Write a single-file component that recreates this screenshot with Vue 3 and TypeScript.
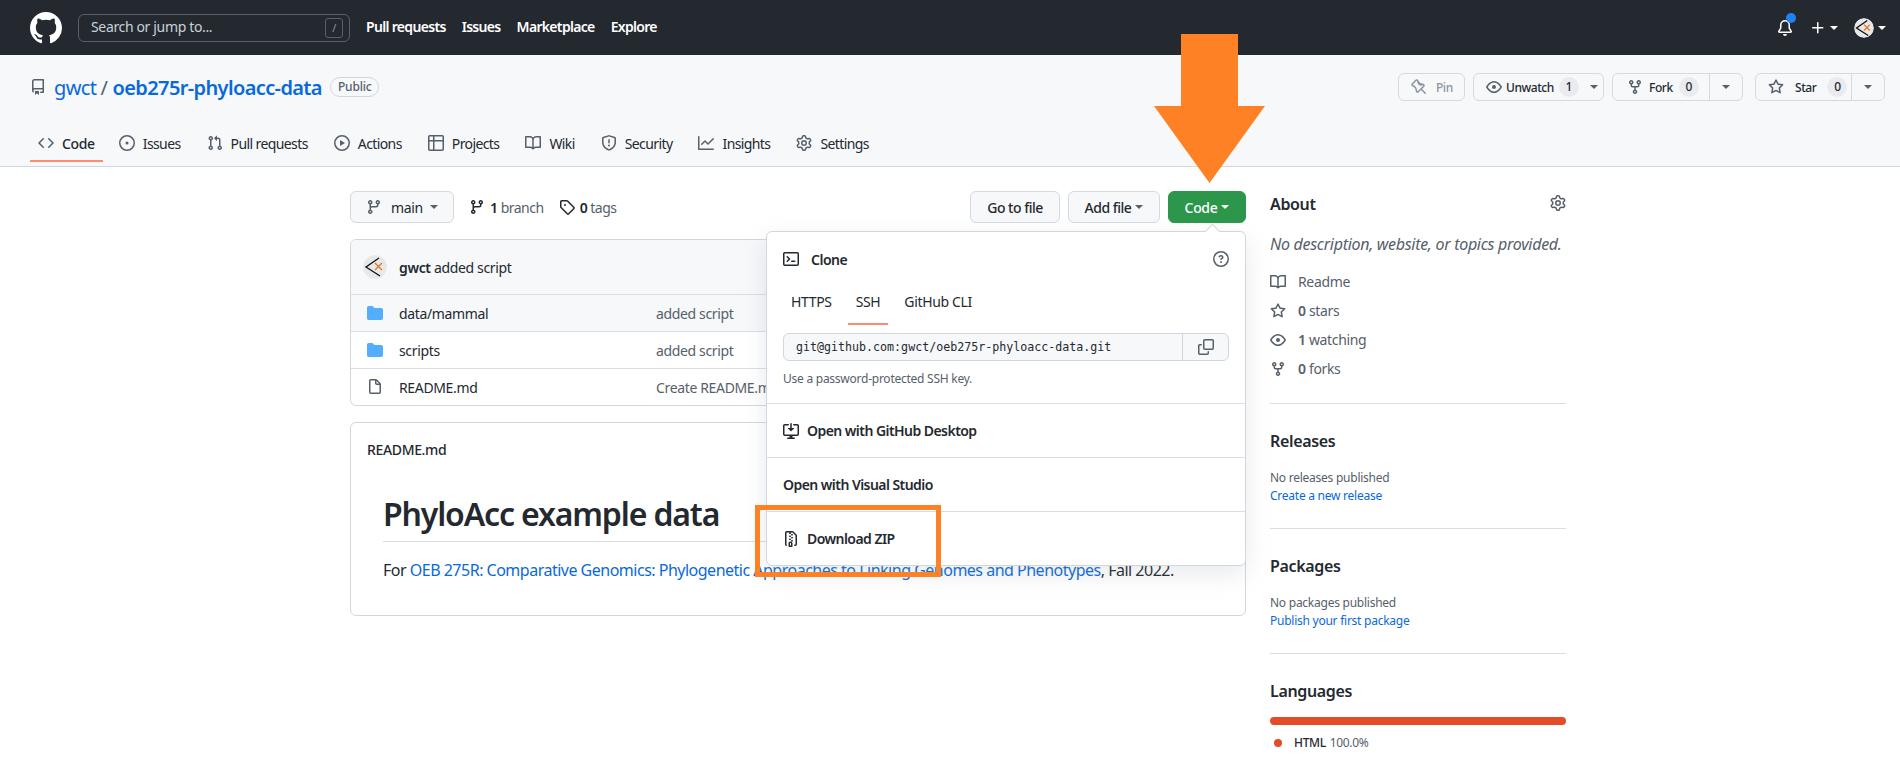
<script setup lang="ts">
const navLinks: string[] = ['Pull requests', 'Issues', 'Marketplace', 'Explore']

const icons: Record<string, string> = {
  code: 'M4.72 3.22a.75.75 0 011.06 1.06L2.06 8l3.72 3.72a.75.75 0 11-1.06 1.06L.47 8.53a.75.75 0 010-1.06l4.25-4.25zm6.56 0a.75.75 0 10-1.06 1.06L13.94 8l-3.72 3.72a.75.75 0 101.06 1.06l4.25-4.25a.75.75 0 000-1.06l-4.25-4.25z',
  issue: 'M8 9.5a1.5 1.5 0 100-3 1.5 1.5 0 000 3zM8 0a8 8 0 100 16A8 8 0 008 0zM1.5 8a6.5 6.5 0 1113 0 6.5 6.5 0 01-13 0z',
  pull: 'M7.177 3.073L9.573.677A.25.25 0 0110 .854v4.792a.25.25 0 01-.427.177L7.177 3.427a.25.25 0 010-.354zM3.75 2.5a.75.75 0 100 1.5.75.75 0 000-1.5zm-2.25.75a2.25 2.25 0 113 2.122v5.256a2.251 2.251 0 11-1.5 0V5.372A2.25 2.25 0 011.5 3.25zM11 2.5h-1V4h1a1 1 0 011 1v5.628a2.251 2.251 0 101.5 0V5A2.5 2.5 0 0011 2.5zm1 10.25a.75.75 0 111.5 0 .75.75 0 01-1.5 0zM3.75 12a.75.75 0 100 1.5.75.75 0 000-1.5z',
  play: 'M1.5 8a6.5 6.5 0 1113 0 6.5 6.5 0 01-13 0zM8 0a8 8 0 100 16A8 8 0 008 0zM6.379 5.227A.25.25 0 006 5.442v5.117a.25.25 0 00.379.214l4.264-2.559a.25.25 0 000-.428L6.379 5.227z',
  table: 'M0 1.75C0 .784.784 0 1.75 0h12.5C15.216 0 16 .784 16 1.75v12.5A1.75 1.75 0 0114.25 16H1.75A1.75 1.75 0 010 14.25V1.75zM1.5 6.5v7.75c0 .138.112.25.25.25H5v-8H1.5zM5 5H1.5V1.75a.25.25 0 01.25-.25H5V5zm1.5 1.5v8h7.75a.25.25 0 00.25-.25V6.5h-8zm8-1.5h-8V1.5h7.75a.25.25 0 01.25.25V5z',
  book: 'M0 1.75A.75.75 0 01.75 1h4.253c1.227 0 2.317.59 3 1.501A3.744 3.744 0 0111.006 1h4.245a.75.75 0 01.75.75v10.5a.75.75 0 01-.75.75h-4.507a2.25 2.25 0 00-1.591.659l-.622.621a.75.75 0 01-1.06 0l-.622-.621A2.25 2.25 0 005.258 13H.75a.75.75 0 01-.75-.75V1.75zm8.755 3a2.25 2.25 0 012.25-2.25H14.5v9h-3.757c-.71 0-1.4.201-1.992.572l.004-7.322zm-1.504 7.324l.004-5.073-.002-2.253A2.25 2.25 0 005.003 2.5H1.5v9h3.757a3.75 3.75 0 011.994.574z',
  shield: 'M7.467.133a1.75 1.75 0 011.066 0l5.25 1.68A1.75 1.75 0 0115 3.48V7c0 1.566-.32 3.182-1.303 4.682-.983 1.498-2.585 2.813-5.032 3.855a1.7 1.7 0 01-1.33 0c-2.447-1.042-4.049-2.357-5.032-3.855C1.32 10.182 1 8.566 1 7V3.48a1.75 1.75 0 011.217-1.667l5.25-1.68zm.61 1.429a.25.25 0 00-.153 0l-5.25 1.68a.25.25 0 00-.174.238V7c0 1.358.275 2.666 1.057 3.86.784 1.194 2.121 2.34 4.366 3.297a.2.2 0 00.154 0c2.245-.956 3.582-2.104 4.366-3.298C13.225 9.666 13.5 8.36 13.5 7V3.48a.25.25 0 00-.174-.237l-5.25-1.68zM9 10.5a1 1 0 11-2 0 1 1 0 012 0zm-.25-5.75a.75.75 0 10-1.5 0v3a.75.75 0 001.5 0v-3z',
  graph: 'M1.5 1.75a.75.75 0 00-1.5 0v12.5c0 .414.336.75.75.75h14.5a.75.75 0 000-1.5H1.5V1.75zm14.28 2.53a.75.75 0 00-1.06-1.06L10 7.94 7.53 5.47a.75.75 0 00-1.06 0L3.22 8.72a.75.75 0 001.06 1.06L7 7.06l2.47 2.47a.75.75 0 001.06 0l5.25-5.25z',
  gear: 'M7.429 1.525a6.593 6.593 0 011.142 0c.036.003.108.036.137.146l.289 1.105c.147.56.55.967.997 1.189.174.086.341.183.501.29.417.278.97.423 1.53.27l1.102-.303c.11-.03.175.016.195.046.219.31.41.641.573.989.014.031.022.11-.059.19l-.815.806c-.411.406-.562.957-.53 1.456a4.588 4.588 0 010 .582c-.032.499.119 1.05.53 1.456l.815.806c.08.08.073.159.059.19a6.494 6.494 0 01-.573.99c-.02.029-.086.074-.195.045l-1.103-.303c-.559-.153-1.112-.008-1.529.27-.16.107-.327.204-.5.29-.449.222-.851.628-.998 1.189l-.289 1.105c-.029.11-.101.143-.137.146a6.613 6.613 0 01-1.142 0c-.036-.003-.108-.037-.137-.146l-.289-1.105c-.147-.56-.55-.967-.997-1.189a4.502 4.502 0 01-.501-.29c-.417-.278-.97-.423-1.53-.27l-1.102.303c-.11.03-.175-.016-.195-.046a6.492 6.492 0 01-.573-.989c-.014-.031-.022-.11.059-.19l.815-.806c.411-.406.562-.957.53-1.456a4.587 4.587 0 010-.582c.032-.499-.119-1.05-.53-1.456l-.815-.806c-.08-.08-.073-.159-.059-.19a6.44 6.44 0 01.573-.99c.02-.029.086-.075.195-.045l1.103.303c.559.153 1.112.008 1.529-.27.16-.107.327-.204.5-.29.449-.222.851-.628.998-1.189l.289-1.105c.029-.11.101-.143.137-.146zM8 0c-.236 0-.47.01-.701.03-.743.065-1.29.615-1.458 1.261l-.29 1.106c-.017.066-.078.158-.211.224a5.994 5.994 0 00-.668.386c-.123.082-.233.09-.3.071L3.27 2.776c-.644-.177-1.392.02-1.82.63a7.977 7.977 0 00-.704 1.217c-.315.675-.111 1.422.363 1.891l.815.806c.05.048.098.147.088.294a6.084 6.084 0 000 .772c.01.147-.038.246-.088.294l-.815.806c-.474.469-.678 1.216-.363 1.891.2.428.436.835.704 1.218.428.609 1.176.806 1.82.63l1.103-.303c.066-.019.176-.011.299.071.213.143.436.272.668.386.133.066.194.158.212.224l.289 1.106c.169.646.715 1.196 1.458 1.26a8.094 8.094 0 001.402 0c.743-.064 1.29-.614 1.458-1.26l.29-1.106c.017-.066.078-.158.211-.224a5.98 5.98 0 00.668-.386c.123-.082.233-.09.3-.071l1.102.302c.644.177 1.392-.02 1.82-.63.268-.382.505-.789.704-1.217.315-.675.111-1.422-.364-1.891l-.814-.806c-.05-.048-.098-.147-.088-.294a6.1 6.1 0 000-.772c-.01-.147.039-.246.088-.294l.814-.806c.475-.469.679-1.216.364-1.891a7.992 7.992 0 00-.704-1.218c-.428-.609-1.176-.806-1.82-.63l-1.103.303c-.066.019-.176.011-.299-.071a5.991 5.991 0 00-.668-.386c-.133-.066-.194-.158-.212-.224L10.16 1.29C9.99.645 9.444.095 8.701.031A8.094 8.094 0 008 0zm1.5 8a1.5 1.5 0 11-3 0 1.5 1.5 0 013 0zM11 8a3 3 0 11-6 0 3 3 0 016 0z',
  eye: 'M1.679 7.932c.412-.621 1.242-1.75 2.366-2.717C5.175 4.242 6.527 3.5 8 3.5c1.473 0 2.824.742 3.955 1.715 1.124.967 1.954 2.096 2.366 2.717a.119.119 0 010 .136c-.412.621-1.242 1.75-2.366 2.717C10.825 11.758 9.473 12.5 8 12.5c-1.473 0-2.824-.742-3.955-1.715C2.92 9.818 2.09 8.69 1.679 8.068a.119.119 0 010-.136zM8 2c-1.981 0-3.67.992-4.933 2.078C1.797 5.169.88 6.423.43 7.1a1.619 1.619 0 000 1.798c.45.678 1.367 1.932 2.637 3.024C4.329 13.008 6.019 14 8 14c1.981 0 3.67-.992 4.933-2.078 1.27-1.091 2.187-2.345 2.637-3.023a1.619 1.619 0 000-1.798c-.45-.678-1.367-1.932-2.637-3.023C11.671 2.992 9.981 2 8 2zm0 8a2 2 0 100-4 2 2 0 000 4z',
  fork: 'M5 3.25a.75.75 0 11-1.5 0 .75.75 0 011.5 0zm0 2.122a2.25 2.25 0 10-1.5 0v.878A2.25 2.25 0 005.75 8.5h1.5v2.128a2.251 2.251 0 101.5 0V8.5h1.5a2.25 2.25 0 002.25-2.25v-.878a2.25 2.25 0 10-1.5 0v.878a.75.75 0 01-.75.75h-4.5A.75.75 0 015 6.25v-.878zm3.75 7.378a.75.75 0 11-1.5 0 .75.75 0 011.5 0zm3-8.75a.75.75 0 100-1.5.75.75 0 000 1.5z',
  star: 'M8 .25a.75.75 0 01.673.418l1.882 3.815 4.21.612a.75.75 0 01.416 1.279l-3.046 2.97.719 4.192a.75.75 0 01-1.088.791L8 12.347l-3.766 1.98a.75.75 0 01-1.088-.79l.72-4.194L.818 6.374a.75.75 0 01.416-1.28l4.21-.611L7.327.668A.75.75 0 018 .25zm0 2.445L6.615 5.5a.75.75 0 01-.564.41l-3.097.45 2.24 2.184a.75.75 0 01.216.664l-.528 3.084 2.769-1.456a.75.75 0 01.698 0l2.77 1.456-.53-3.084a.75.75 0 01.216-.664l2.24-2.183-3.096-.45a.75.75 0 01-.564-.41L8 2.694z',
  pin: 'M4.456.734a1.75 1.75 0 012.826.504l.613 1.327a3.081 3.081 0 002.084 1.707l2.454.584c1.332.317 1.8 1.972.832 2.94L11.06 10l3.72 3.72a.75.75 0 11-1.06 1.06L10 11.06l-2.204 2.205c-.968.968-2.623.5-2.94-.832l-.584-2.454a3.081 3.081 0 00-1.707-2.084l-1.327-.613a1.75 1.75 0 01-.504-2.826L4.456.734zM5.92 1.866a.25.25 0 00-.404-.072L1.794 5.516a.25.25 0 00.072.404l1.328.613A4.582 4.582 0 015.73 9.63l.584 2.454a.25.25 0 00.42.12l5.47-5.47a.25.25 0 00-.12-.42L9.63 6.73a4.581 4.581 0 01-3.098-2.537L5.92 1.866z',
  repo: 'M2 2.5A2.5 2.5 0 014.5 0h8.75a.75.75 0 01.75.75v12.5a.75.75 0 01-.75.75h-2.5a.75.75 0 110-1.5h1.75v-2h-8a1 1 0 00-.714 1.7.75.75 0 01-1.072 1.05A2.495 2.495 0 012 11.5v-9zm10.5-1V9h-8c-.356 0-.694.074-1 .208V2.5a1 1 0 011-1h8zM5 12.25v3.25a.25.25 0 00.4.2l1.45-1.087a.25.25 0 01.3 0L8.6 15.7a.25.25 0 00.4-.2v-3.25a.25.25 0 00-.25-.25h-3.5a.25.25 0 00-.25.25z',
  branch: 'M11.75 2.5a.75.75 0 100 1.5.75.75 0 000-1.5zm-2.25.75a2.25 2.25 0 113 2.122V6A2.5 2.5 0 0110 8.5H6a1 1 0 00-1 1v1.128a2.251 2.251 0 11-1.5 0V5.372a2.25 2.25 0 111.5 0v1.836A2.492 2.492 0 016 7h4a1 1 0 001-1v-.628A2.25 2.25 0 019.5 3.25zM4.25 12a.75.75 0 100 1.5.75.75 0 000-1.5zM3.5 3.25a.75.75 0 111.5 0 .75.75 0 01-1.5 0z',
  tag: 'M2.5 7.775V2.75a.25.25 0 01.25-.25h5.025a.25.25 0 01.177.073l6.25 6.25a.25.25 0 010 .354l-5.025 5.025a.25.25 0 01-.354 0l-6.25-6.25a.25.25 0 01-.073-.177zm-1.5 0V2.75C1 1.784 1.784 1 2.75 1h5.025c.464 0 .91.184 1.238.513l6.25 6.25a1.75 1.75 0 010 2.474l-5.026 5.026a1.75 1.75 0 01-2.474 0l-6.25-6.25A1.75 1.75 0 011 7.775zM6 5a1 1 0 100 2 1 1 0 000-2z',
  folder: 'M1.75 1A1.75 1.75 0 000 2.75v10.5C0 14.216.784 15 1.75 15h12.5A1.75 1.75 0 0016 13.25v-8.5A1.75 1.75 0 0014.25 3H7.5a.25.25 0 01-.2-.1l-.9-1.2C6.07 1.26 5.55 1 5 1H1.75z',
  file: 'M3.75 1.5a.25.25 0 00-.25.25v11.5c0 .138.112.25.25.25h8.5a.25.25 0 00.25-.25V6H9.75A1.75 1.75 0 018 4.25V1.5H3.75zm5.75.56v2.19c0 .138.112.25.25.25h2.19L9.5 2.06zM2 1.75C2 .784 2.784 0 3.75 0h5.086c.464 0 .909.184 1.237.513l3.414 3.414c.329.328.513.773.513 1.237v8.086A1.75 1.75 0 0112.25 15h-8.5A1.75 1.75 0 012 13.25V1.75z',
  terminal: 'M0 2.75C0 1.784.784 1 1.75 1h12.5c.966 0 1.75.784 1.75 1.75v10.5A1.75 1.75 0 0114.25 15H1.75A1.75 1.75 0 010 13.25V2.75zm1.75-.25a.25.25 0 00-.25.25v10.5c0 .138.112.25.25.25h12.5a.25.25 0 00.25-.25V2.75a.25.25 0 00-.25-.25H1.75zM7.25 8a.75.75 0 01-.22.53l-2.25 2.25a.75.75 0 11-1.06-1.06L5.44 8 3.72 6.28a.75.75 0 111.06-1.06l2.25 2.25c.141.14.22.331.22.53zm1.5 1.5a.75.75 0 000 1.5h3a.75.75 0 000-1.5h-3z',
  question: 'M8 1.5a6.5 6.5 0 100 13 6.5 6.5 0 000-13zM0 8a8 8 0 1116 0A8 8 0 010 8zm9 3a1 1 0 11-2 0 1 1 0 012 0zM6.92 6.085c.081-.16.19-.299.34-.398.145-.097.371-.187.74-.187.28 0 .553.087.738.225A.613.613 0 019 6.25c0 .177-.04.264-.077.318a.956.956 0 01-.277.245c-.076.051-.158.1-.258.161l-.007.004a7.728 7.728 0 00-.313.195 2.416 2.416 0 00-.692.661.75.75 0 001.248.832.956.956 0 01.276-.245 6.3 6.3 0 01.26-.16l.006-.004c.093-.057.204-.123.313-.195.222-.149.487-.355.692-.662.214-.32.329-.702.329-1.15 0-.76-.36-1.348-.863-1.725A2.76 2.76 0 008 4c-.631 0-1.155.16-1.572.438-.413.276-.68.638-.849.977a.75.75 0 101.342.67z',
  copy: 'M0 6.75C0 5.784.784 5 1.75 5h1.5a.75.75 0 010 1.5h-1.5a.25.25 0 00-.25.25v7.5c0 .138.112.25.25.25h7.5a.25.25 0 00.25-.25v-1.5a.75.75 0 011.5 0v1.5A1.75 1.75 0 019.25 16h-7.5A1.75 1.75 0 010 14.25v-7.5zM5 1.75C5 .784 5.784 0 6.75 0h7.5C15.216 0 16 .784 16 1.75v7.5A1.75 1.75 0 0114.25 11h-7.5A1.75 1.75 0 015 9.25v-7.5zm1.75-.25a.25.25 0 00-.25.25v7.5c0 .138.112.25.25.25h7.5a.25.25 0 00.25-.25v-7.5a.25.25 0 00-.25-.25h-7.5z',
  desktop: 'M4.927 5.427l2.896 2.896a.25.25 0 00.354 0l2.896-2.896A.25.25 0 0010.896 5H8.75V.75a.75.75 0 10-1.5 0V5H5.104a.25.25 0 00-.177.427zM1.75 2.5a.25.25 0 00-.25.25v8.5c0 .138.112.25.25.25h12.5a.25.25 0 00.25-.25v-8.5a.25.25 0 00-.25-.25h-3.5a.75.75 0 010-1.5h3.5c.966 0 1.75.784 1.75 1.75v8.5A1.75 1.75 0 0114.25 13H9.5v1.5h1.75a.75.75 0 010 1.5h-6.5a.75.75 0 010-1.5H6.5V13H1.75A1.75 1.75 0 010 11.25v-8.5C0 1.784.784 1 1.75 1h3.5a.75.75 0 010 1.5h-3.5z',
  zip: 'M3.5 1.75a.25.25 0 01.25-.25h3a.75.75 0 000 1.5h.5a.75.75 0 000-1.5h2.086a.25.25 0 01.177.073l2.914 2.914a.25.25 0 01.073.177v8.586a.25.25 0 01-.25.25h-.5a.75.75 0 000 1.5h.5A1.75 1.75 0 0014 13.25V4.664c0-.464-.184-.909-.513-1.237L10.573.513A1.75 1.75 0 009.336 0H3.75A1.75 1.75 0 002 1.75v11.5c0 .649.353 1.214.874 1.515a.75.75 0 10.752-1.298.25.25 0 01-.126-.217V1.75zM8.75 3a.75.75 0 000 1.5h.5a.75.75 0 000-1.5h-.5zM6 5.25a.75.75 0 01.75-.75h.5a.75.75 0 010 1.5h-.5A.75.75 0 016 5.25zm2 1.5A.75.75 0 018.75 6h.5a.75.75 0 010 1.5h-.5A.75.75 0 018 6.75zm-1.25.75a.75.75 0 000 1.5h.5a.75.75 0 000-1.5h-.5zM8 9.75A.75.75 0 018.75 9h.5a.75.75 0 010 1.5h-.5A.75.75 0 018 9.75zm-.75.75a1.75 1.75 0 00-1.75 1.75v3c0 .414.336.75.75.75h2.5a.75.75 0 00.75-.75v-3a1.75 1.75 0 00-1.75-1.75h-.5zM7 12.25a.25.25 0 01.25-.25h.5a.25.25 0 01.25.25v2.25H7v-2.25z',
  bell: 'M8 16a2 2 0 001.985-1.75c.017-.137-.097-.25-.235-.25h-3.5c-.138 0-.252.113-.235.25A2 2 0 008 16zM3 5a5 5 0 0110 0v2.947c0 .05.015.098.042.139l1.703 2.555A1.518 1.518 0 0113.482 13H2.518a1.518 1.518 0 01-1.263-2.36l1.703-2.554A.25.25 0 003 7.947V5zm5-3.5A3.5 3.5 0 004.5 5v2.947c0 .346-.102.683-.294.97l-1.703 2.556a.018.018 0 00.015.027h10.964a.018.018 0 00.015-.027l-1.703-2.556a1.75 1.75 0 01-.294-.97V5A3.5 3.5 0 008 1.5z',
  plus: 'M7.75 2a.75.75 0 01.75.75V7h4.25a.75.75 0 010 1.5H8.5v4.25a.75.75 0 01-1.5 0V8.5H2.75a.75.75 0 010-1.5H7V2.75A.75.75 0 017.75 2z',
  logo: 'M8 0C3.58 0 0 3.58 0 8c0 3.54 2.29 6.53 5.47 7.59.4.07.55-.17.55-.38 0-.19-.01-.82-.01-1.49-2.01.37-2.53-.49-2.69-.94-.09-.23-.48-.94-.82-1.13-.28-.15-.68-.52-.01-.53.63-.01 1.08.58 1.23.82.72 1.21 1.87.87 2.33.66.07-.52.28-.87.51-1.07-1.78-.2-3.64-.89-3.64-3.95 0-.87.31-1.59.82-2.15-.08-.2-.36-1.02.08-2.12 0 0 .67-.21 2.2.82.64-.18 1.32-.27 2-.27.68 0 1.36.09 2 .27 1.53-1.04 2.2-.82 2.2-.82.44 1.1.16 1.92.08 2.12.51.56.82 1.27.82 2.15 0 3.07-1.87 3.75-3.65 3.95.29.25.54.73.54 1.48 0 1.07-.01 1.93-.01 2.2 0 .21.15.46.55.38A8.013 8.013 0 0016 8c0-4.42-3.58-8-8-8z'
}

const tabs = [
  { label: 'Code', icon: icons.code, active: true },
  { label: 'Issues', icon: icons.issue },
  { label: 'Pull requests', icon: icons.pull },
  { label: 'Actions', icon: icons.play },
  { label: 'Projects', icon: icons.table },
  { label: 'Wiki', icon: icons.book },
  { label: 'Security', icon: icons.shield },
  { label: 'Insights', icon: icons.graph },
  { label: 'Settings', icon: icons.gear }
]

const files = [
  { name: 'data/mammal', msg: 'added script', icon: icons.folder, dir: true, hover: true },
  { name: 'scripts', msg: 'added script', icon: icons.folder, dir: true },
  { name: 'README.md', msg: 'Create README.md', icon: icons.file }
]

const stats = [
  { icon: icons.book, n: '', label: 'Readme' },
  { icon: icons.star, n: '0', label: 'stars' },
  { icon: icons.eye, n: '1', label: 'watching' },
  { icon: icons.fork, n: '0', label: 'forks' }
]
</script>

<template>
  <div class="page">
    <header class="topbar">
      <svg class="logo" viewBox="0 0 16 16" width="32" height="32"><path :d="icons.logo" fill="#fff" /></svg>
      <div class="search">
        <span>Search or jump to...</span>
        <kbd>/</kbd>
      </div>
      <nav class="topnav">
        <a v-for="l in navLinks" :key="l">{{ l }}</a>
      </nav>
      <div class="topright">
        <span class="bell">
          <svg viewBox="0 0 16 16" width="16" height="16"><path :d="icons.bell" fill="#fff" /></svg>
          <i class="dot"></i>
        </span>
        <svg class="plus" viewBox="0 0 16 16" width="16" height="16"><path :d="icons.plus" fill="#fff" /></svg>
        <i class="caret white"></i>
        <svg class="avatar top-avatar" viewBox="0 0 24 24" width="20" height="20">
          <circle cx="12" cy="12" r="12" fill="#e8e8e8" />
          <path d="M16 3 L3 12 L17 21" fill="none" stroke="#111" stroke-width="1.6" />
          <path d="M12 8 L19 15 M12 15 L19 8" fill="none" stroke="#e8711a" stroke-width="1.5" />
        </svg>
        <i class="caret white"></i>
      </div>
    </header>

    <section class="repohead">
      <div class="repo-row">
        <div class="title">
          <svg viewBox="0 0 16 16" width="16" height="16"><path :d="icons.repo" fill="#57606a" /></svg>
          <a class="owner">gwct</a>
          <span class="slash">/</span>
          <a class="repo">oeb275r-phyloacc-data</a>
          <span class="public">Public</span>
        </div>
        <div class="actions">
          <span class="btn-sm pin">
            <svg viewBox="0 0 16 16" width="16" height="16"><path :d="icons.pin" fill="#8c959f" /></svg>
            <span>Pin</span>
          </span>
          <span class="btn-sm watch">
            <svg viewBox="0 0 16 16" width="16" height="16"><path :d="icons.eye" fill="#57606a" /></svg>
            <span>Unwatch</span>
            <b class="counter">1</b>
            <i class="caret"></i>
          </span>
          <span class="split fork">
            <span class="btn-main">
              <svg viewBox="0 0 16 16" width="16" height="16"><path :d="icons.fork" fill="#57606a" /></svg>
              <span>Fork</span>
              <b class="counter">0</b>
            </span>
            <span class="btn-side"><i class="caret"></i></span>
          </span>
          <span class="split star">
            <span class="btn-main">
              <svg viewBox="0 0 16 16" width="16" height="16"><path :d="icons.star" fill="#57606a" /></svg>
              <span>Star</span>
              <b class="counter">0</b>
            </span>
            <span class="btn-side"><i class="caret"></i></span>
          </span>
        </div>
      </div>
      <nav class="tabs">
        <a v-for="t in tabs" :key="t.label" class="tab" :class="{ active: t.active }">
          <svg viewBox="0 0 16 16" width="16" height="16"><path :d="t.icon" fill="#57606a" /></svg>
          <span>{{ t.label }}</span>
        </a>
      </nav>
    </section>

    <main class="layout">
      <div class="leftcol">
        <div class="toolbar">
          <span class="btn branchbtn">
            <svg viewBox="0 0 16 16" width="16" height="16"><path :d="icons.branch" fill="#57606a" /></svg>
            <span>main</span>
            <i class="caret"></i>
          </span>
          <span class="meta first">
            <svg viewBox="0 0 16 16" width="16" height="16"><path :d="icons.branch" fill="#24292f" /></svg>
            <span><b>1</b> branch</span>
          </span>
          <span class="meta">
            <svg viewBox="0 0 16 16" width="16" height="16"><path :d="icons.tag" fill="#24292f" /></svg>
            <span><b>0</b> tags</span>
          </span>
          <span class="spacer"></span>
          <span class="btn gotofile">Go to file</span>
          <span class="btn addfile">Add file <i class="caret"></i></span>
          <span class="btn green">Code <i class="caret white"></i></span>
        </div>

        <div class="filebox">
          <div class="commit">
            <svg class="avatar" viewBox="0 0 24 24" width="24" height="24">
              <circle cx="12" cy="12" r="12" fill="#e8e8e8" />
              <path d="M16 3 L3 12 L17 21" fill="none" stroke="#111" stroke-width="1.3" />
              <path d="M12 8 L19 15 M12 15 L19 8" fill="none" stroke="#e8711a" stroke-width="1.2" />
            </svg>
            <span><b>gwct</b> added script</span>
          </div>
          <div v-for="f in files" :key="f.name" class="filerow" :class="{ hover: f.hover }">
            <svg viewBox="0 0 16 16" width="16" height="16"><path :d="f.icon" :fill="f.dir ? '#54aeff' : '#57606a'" /></svg>
            <span class="fname">{{ f.name }}</span>
            <span class="fmsg">{{ f.msg }}</span>
          </div>
        </div>

        <article class="readme">
          <div class="readme-title">README.md</div>
          <div class="markdown">
            <h1>PhyloAcc example data</h1>
            <p>For <a>OEB 275R: Comparative Genomics: Phylogenetic Approaches to Linking Genomes and Phenotypes</a>, Fall 2022.</p>
          </div>
        </article>

        <div class="dropdown">
          <i class="notch"></i>
          <div class="dd-clone">
            <div class="dd-head">
              <svg viewBox="0 0 16 16" width="16" height="16"><path :d="icons.terminal" fill="#24292f" /></svg>
              <b>Clone</b>
              <svg class="help" viewBox="0 0 16 16" width="16" height="16"><path :d="icons.question" fill="#57606a" /></svg>
            </div>
            <div class="dd-tabs">
              <span>HTTPS</span>
              <span class="on">SSH</span>
              <span>GitHub CLI</span>
            </div>
            <div class="urlbox">
              <span class="url">git@github.com:gwct/oeb275r-phyloacc-data.git</span>
              <span class="copy"><svg viewBox="0 0 16 16" width="16" height="16"><path :d="icons.copy" fill="#57606a" /></svg></span>
            </div>
            <div class="hint">Use a password-protected SSH key.</div>
          </div>
          <div class="dd-item">
            <svg viewBox="0 0 16 16" width="16" height="16"><path :d="icons.desktop" fill="#24292f" /></svg>
            <span>Open with GitHub Desktop</span>
          </div>
          <div class="dd-item"><span>Open with Visual Studio</span></div>
          <div class="dd-item">
            <svg viewBox="0 0 16 16" width="16" height="16"><path :d="icons.zip" fill="#24292f" /></svg>
            <span>Download ZIP</span>
          </div>
        </div>
      </div>

      <aside class="sidebar">
        <section class="side-sec about">
          <div class="side-h">
            <h2>About</h2>
            <svg viewBox="0 0 16 16" width="16" height="16"><path :d="icons.gear" fill="#57606a" /></svg>
          </div>
          <p class="desc">No description, website, or topics provided.</p>
          <div v-for="s in stats" :key="s.label" class="stat">
            <svg viewBox="0 0 16 16" width="16" height="16"><path :d="s.icon" fill="#57606a" /></svg>
            <span><b v-if="s.n">{{ s.n }}</b> {{ s.label }}</span>
          </div>
        </section>
        <section class="side-sec">
          <h2>Releases</h2>
          <div class="small muted">No releases published</div>
          <a class="small link">Create a new release</a>
        </section>
        <section class="side-sec">
          <h2>Packages</h2>
          <div class="small muted">No packages published</div>
          <a class="small link">Publish your first package</a>
        </section>
        <section class="side-sec langs">
          <h2>Languages</h2>
          <div class="langbar"></div>
          <div class="lang"><i></i><b>HTML</b><span>100.0%</span></div>
        </section>
      </aside>
    </main>

    <svg class="arrow" viewBox="0 0 112 150" width="112" height="150">
      <path d="M27 0 H84 V72 H111 L55.5 149 L0 72 H27 Z" fill="#ff8125" />
    </svg>
    <div class="ziprect"></div>
  </div>
</template>

<style>
html, body { margin: 0; background: #fff; }
</style>

<style scoped>
.page {
  position: relative;
  height: 776px;
  overflow: hidden;
  font-family: "Noto Sans", "Open Sans", sans-serif;
  font-size: 14px;
  letter-spacing: -0.35px;
  color: #24292f;
}
svg { display: block; flex: none; }
path { fill-rule: evenodd; }
a { color: inherit; text-decoration: none; }
b { font-weight: 600; }

.caret {
  display: inline-block;
  width: 0;
  height: 0;
  border-left: 4px solid transparent;
  border-right: 4px solid transparent;
  border-top: 4px solid #57606a;
  flex: none;
}
.caret.white { border-top-color: #fff; }

.topbar {
  height: 55px;
  background: #24292f;
  display: flex;
  align-items: center;
  padding: 0 14px 0 30px;
  color: #fff;
  box-sizing: border-box;
}
.logo { margin-right: 16px; }
.search {
  box-sizing: border-box;
  width: 272px;
  height: 28px;
  border: 1px solid #57606a;
  border-radius: 6px;
  display: flex;
  align-items: center;
  justify-content: space-between;
  padding: 0 6px 0 12px;
  color: #c9d1d9;
}
.search > span { padding-bottom: 2px; }
kbd {
  box-sizing: border-box;
  width: 18px;
  height: 20px;
  border: 1px solid #57606a;
  border-radius: 3px;
  font: 11px "Noto Sans", sans-serif;
  color: #8c959f;
  display: flex;
  align-items: center;
  justify-content: center;
}
.topnav { display: flex; gap: 16px; margin-left: 16px; font-weight: 600; padding-bottom: 2px; letter-spacing: -0.68px; }
.topright { margin-left: auto; display: flex; align-items: center; }
.bell { position: relative; margin-right: 17px; }
.dot {
  position: absolute;
  top: -7px;
  left: 9px;
  width: 10px;
  height: 10px;
  border-radius: 50%;
  background: #2080f5;
}
.plus { margin-right: 4px; }
.top-avatar { margin-left: 16px; margin-right: 4px; }
.avatar { border-radius: 50%; }

.repohead {
  height: 112px;
  box-sizing: border-box;
  background: #f6f8fa;
  border-bottom: 1px solid #d0d7de;
  padding: 18px 15px 0 30px;
  display: flex;
  flex-direction: column;
}
.repo-row { display: flex; justify-content: space-between; height: 28px; }
.title { display: flex; align-items: center; font-size: 20px; color: #0969da; height: 28px; }
.title svg { margin-right: 8px; }
.owner { letter-spacing: -0.6px; }
.slash { margin: 0 5px 0 4px; color: #57606a; }
.repo { font-weight: 600; letter-spacing: -0.62px; }
.public {
  margin-left: 8px;
  font-size: 12px;
  font-weight: 500;
  letter-spacing: -0.2px;
  color: #57606a;
  border: 1px solid #d0d7de;
  border-radius: 10px;
  padding: 0 7px;
  line-height: 18px;
}
.actions { display: flex; gap: 8px; font-size: 12px; font-weight: 500; letter-spacing: -0.45px; }
.btn-sm, .split {
  box-sizing: border-box;
  height: 28px;
  border: 1px solid #d5dae0;
  border-radius: 6px;
  background: #f6f8fa;
  display: flex;
  align-items: center;
}
.pin { width: 67px; color: #8c959f; padding-left: 12px; gap: 9px; }
.watch { width: 131px; padding-left: 12px; gap: 4px; }
.watch .counter { margin-left: 1px; margin-right: 7px; }
.split { width: 131px; }
.star { margin-left: 4px; width: 130px; }
.btn-main { flex: 1; display: flex; align-items: center; padding-left: 14px; gap: 6px; }
.star .btn-main { gap: 11px; padding-left: 12px; }
.btn-side {
  width: 33px;
  height: 100%;
  box-sizing: border-box;
  border-left: 1px solid #d5dae0;
  display: flex;
  align-items: center;
  justify-content: center;
}
.counter {
  font-weight: 500;
  min-width: 20px;
  height: 20px;
  line-height: 20px;
  text-align: center;
  border-radius: 10px;
  background: #e9ebee;
}
.tabs { display: flex; gap: 10px; margin-top: 25px; letter-spacing: -0.6px; }
.tab {
  box-sizing: border-box;
  height: 36px;
  padding: 0 8px;
  display: flex;
  align-items: center;
  gap: 8px;
  border-bottom: 2px solid transparent;
}
.tab.active { border-bottom-color: #fd8c73; font-weight: 500; letter-spacing: -0.35px; margin-right: -2px; }

.layout {
  display: flex;
  padding: 24px 0 0 350px;
  gap: 24px;
}
.leftcol { width: 896px; position: relative; }
.toolbar { display: flex; align-items: center; height: 32px; }
.btn {
  box-sizing: border-box;
  height: 32px;
  border: 1px solid #d5dae0;
  border-radius: 6px;
  background: #f6f8fa;
  display: flex;
  align-items: center;
  justify-content: center;
  padding: 0;
  font-weight: 500;
  gap: 4px;
}
.branchbtn { width: 104px; gap: 9px; color: #24292f; justify-content: flex-start; padding: 0 15px; font-weight: 400; }
.branchbtn .caret { margin-left: -2px; }
.meta { display: flex; align-items: center; gap: 5px; color: #57606a; margin-left: 15px; white-space: pre; letter-spacing: -0.5px; }
.meta.first { margin-left: 15px; }
.meta b { color: #24292f; }
.spacer { flex: 1; }
.gotofile { width: 90px; letter-spacing: -0.5px; }
.addfile { margin-left: 8px; width: 92px; letter-spacing: -0.5px; }
.green {
  margin-left: 8px;
  width: 78px;
  background: #2c974b;
  border-color: #2c974b;
  color: #fff;
}
.filebox {
  margin-top: 16px;
  box-sizing: border-box;
  border: 1px solid #d0d7de;
  border-radius: 6px;
  overflow: hidden;
}
.commit {
  height: 54px;
  box-sizing: border-box;
  background: #f6f8fa;
  display: flex;
  align-items: center;
  gap: 12px;
  padding-left: 12px;
}
.filerow {
  height: 37px;
  box-sizing: border-box;
  border-top: 1px solid #d8dee4;
  display: flex;
  align-items: center;
  padding-left: 16px;
}
.filerow.hover { background: #f6f8fa; }
.fname { margin-left: 16px; width: 257px; }
.fmsg { color: #57606a; white-space: nowrap; }

.readme {
  margin-top: 16px;
  box-sizing: border-box;
  height: 194px;
  border: 1px solid #d0d7de;
  border-radius: 6px;
  padding: 16px;
}
.readme-title { font-weight: 500; line-height: 22px; }
.markdown { padding: 33px 16px 0; }
.markdown h1 {
  margin: 0;
  font-size: 32px;
  line-height: 40px;
  font-weight: 600;
  letter-spacing: -1.15px;
  border-bottom: 1px solid #d8dee4;
  padding-bottom: 7px;
}
.markdown p { margin: 16px 0 0; font-size: 16px; line-height: 24px; letter-spacing: -0.5px; white-space: nowrap; }
.markdown a { color: #0969da; }

.dropdown {
  position: absolute;
  top: 40px;
  right: 0;
  width: 480px;
  box-sizing: border-box;
  background: #fff;
  border: 1px solid #d0d7de;
  border-radius: 6px;
  box-shadow: 0 8px 24px rgba(140, 149, 159, 0.2);
}
.notch {
  position: absolute;
  top: -6px;
  right: 27px;
  width: 10px;
  height: 10px;
  background: #fff;
  border-left: 1px solid #d0d7de;
  border-top: 1px solid #d0d7de;
  transform: rotate(45deg);
}
.dd-clone { padding: 16px 16px 0; height: 171px; box-sizing: border-box; }
.dd-head { display: flex; align-items: center; gap: 12px; height: 22px; }
.dd-head b { font-weight: 600; letter-spacing: -0.5px; }
.help { margin-left: auto; }
.dd-tabs { display: flex; margin-top: 9px; height: 46px; }
.dd-tabs span {
  padding: 0 8px;
  margin-right: 8px;
  height: 46px;
  line-height: 46px;
  box-sizing: border-box;
}
.dd-tabs .on { border-bottom: 2px solid #fd8c73; font-weight: 400; padding: 0 8px; }
.urlbox {
  margin-top: 8px;
  box-sizing: border-box;
  height: 28px;
  border: 1px solid #d0d7de;
  border-radius: 6px;
  background: #f6f8fa;
  display: flex;
  align-items: center;
  justify-content: space-between;
}
.url { font: 11.65px "DejaVu Sans Mono", monospace; margin-left: 12px; letter-spacing: 0; }
.copy {
  width: 45px;
  height: 100%;
  border-left: 1px solid #d0d7de;
  display: flex;
  align-items: center;
  justify-content: center;
}
.hint { margin-top: 9px; font-size: 12px; letter-spacing: -0.25px; color: #57606a; }
.dd-item {
  height: 54px;
  box-sizing: border-box;
  border-top: 1px solid #d8dee4;
  display: flex;
  align-items: center;
  padding-left: 16px;
  gap: 8px;
  font-weight: 600;
  letter-spacing: -0.55px;
}

.sidebar { width: 296px; }
.side-sec { border-bottom: 1px solid #d8dee4; padding: 25px 0 23px; }
.about { padding: 0 0 27px; height: 212px; box-sizing: border-box; }
.langs { border-bottom: 0; }
.side-h { display: flex; justify-content: space-between; align-items: center; height: 24px; margin-top: 1px; }
.side-h svg { margin-top: -3px; }
.side-sec h2 { margin: 0; font-size: 16px; font-weight: 600; line-height: 24px; letter-spacing: -0.35px; }
.side-sec > h2 { margin-bottom: 16px; }
.desc { margin: 16px 0 11px; font-size: 16px; line-height: 24px; font-style: italic; color: #57606a; letter-spacing: -0.3px; }
.stat { display: flex; align-items: center; gap: 12px; height: 29px; color: #57606a; }
.stat b { color: #57606a; }
.small { font-size: 12px; line-height: 18px; display: block; letter-spacing: -0.25px; }
.muted { color: #57606a; }
.link { color: #0969da; }
.langbar { height: 8px; border-radius: 4px; background: #e34c26; margin-top: -2px; }
.lang { display: flex; align-items: center; margin-top: 9px; font-size: 12px; }
.lang i { width: 8px; height: 8px; border-radius: 50%; background: #e34c26; margin: 0 12px 0 4px; }
.lang b { margin-right: 4px; font-weight: 500; }
.lang span { color: #57606a; }

.arrow { position: absolute; left: 1154px; top: 34px; }
.ziprect {
  position: absolute;
  left: 755px;
  top: 505px;
  width: 186px;
  height: 72px;
  box-sizing: border-box;
  border: 5px solid #ff8126;
}
</style>
